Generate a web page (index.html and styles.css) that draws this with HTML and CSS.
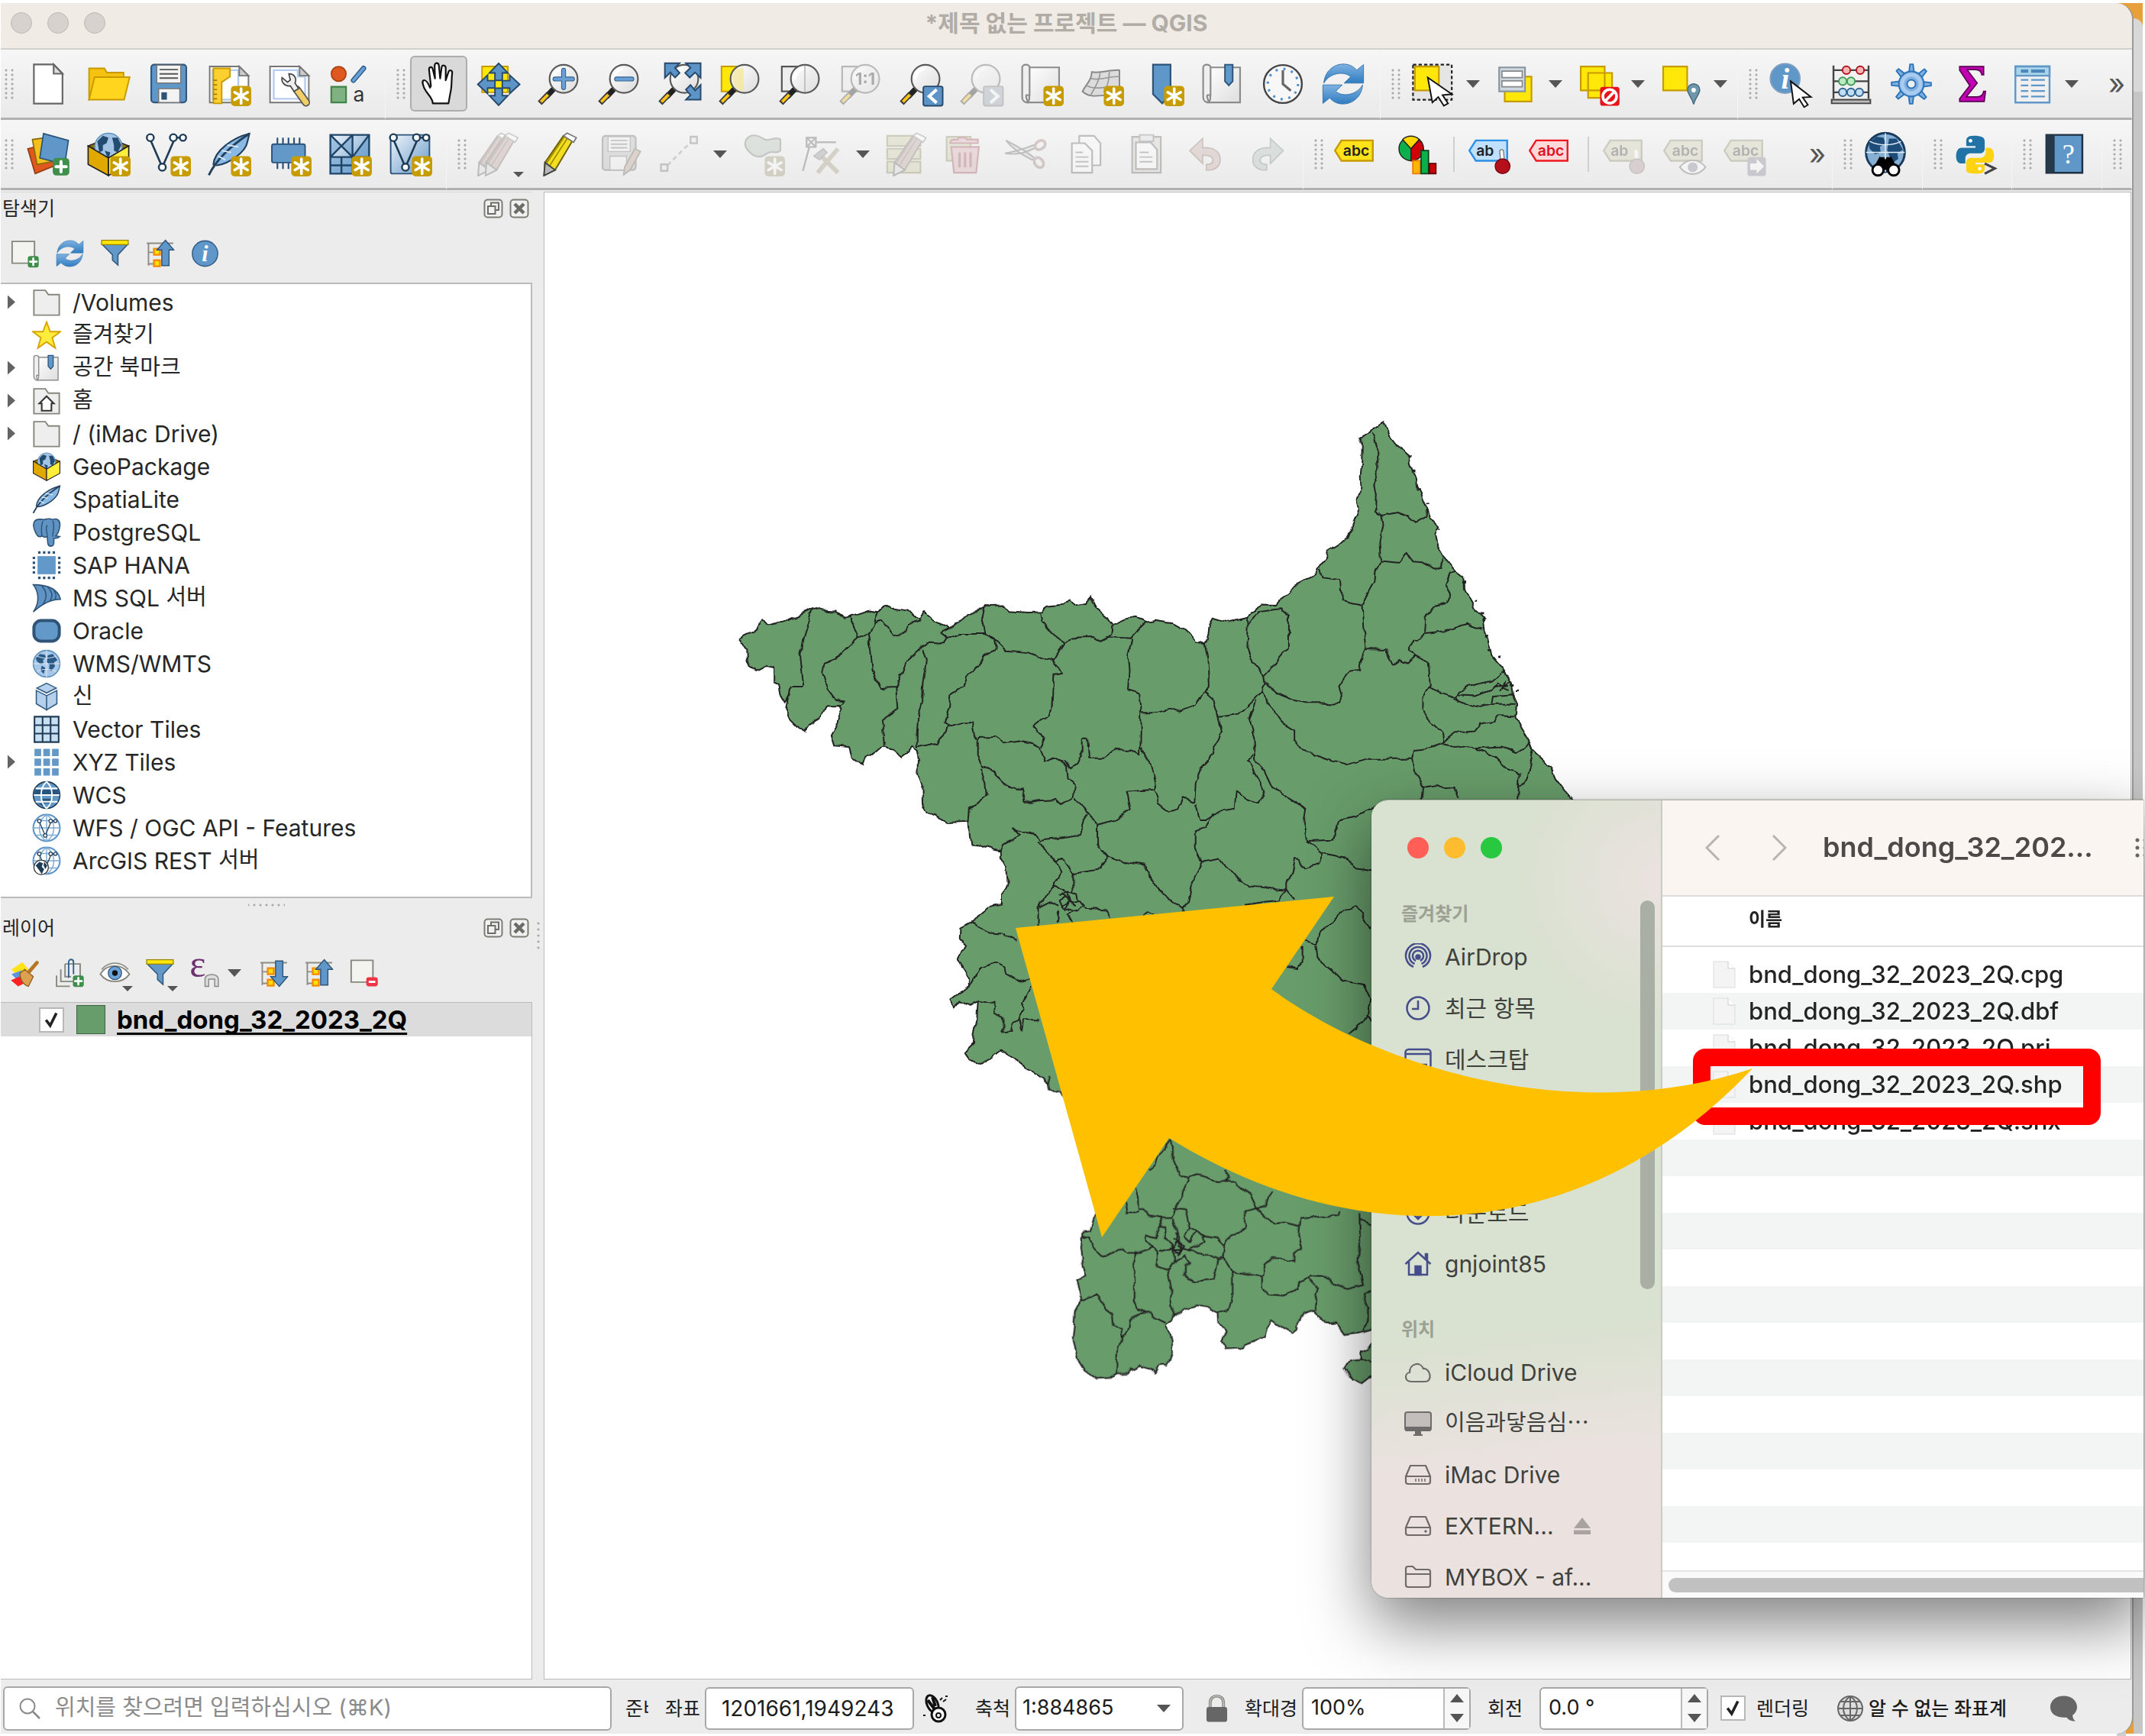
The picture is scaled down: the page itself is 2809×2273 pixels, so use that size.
FILE: index.html
```html
<!DOCTYPE html>
<html lang="ko">
<head>
<meta charset="utf-8">
<title>*제목 없는 프로젝트 — QGIS</title>
<link rel="stylesheet" href="styles.css">
</head>
<body>
<svg class="sprite" width="0" height="0" aria-hidden="true">
  <defs>
    <linearGradient id="g-glass" x1="0" y1="0" x2="1" y2="1"><stop offset="0" stop-color="#fff"/><stop offset="1" stop-color="#dcdcdc"/></linearGradient>
    <linearGradient id="g-blue" x1="0" y1="0" x2="1" y2="1"><stop offset="0" stop-color="#eef4fa"/><stop offset="1" stop-color="#6699c8"/></linearGradient>
    <linearGradient id="g-paper" x1="0" y1="0" x2="1" y2="1"><stop offset="0" stop-color="#fff"/><stop offset="1" stop-color="#dedede"/></linearGradient>
    <linearGradient id="g-sync" x1="0" y1="0" x2="0" y2="1"><stop offset="0" stop-color="#7fb2e2"/><stop offset="1" stop-color="#2f7cc0"/></linearGradient>
  </defs>
  <symbol id="b-new" viewBox="0 0 24 24"><rect x="13" y="13" width="11" height="11" rx="2" fill="#c69c00"/><path d="M18.5 14.5v8M15 16.5l7 4M22 16.5l-7 4" stroke="#fff" stroke-width="1.5" stroke-linecap="round"/></symbol>
  <symbol id="b-plus" viewBox="0 0 24 24"><rect x="14.500" y="14" width="9" height="9.500" rx="2" fill="#3f8f4c"/><path d="M19 16v5.500M16.300 18.700h5.500" stroke="#fff" stroke-width="1.700" stroke-linecap="round"/></symbol>
  <symbol id="s-lens" viewBox="0 0 24 24"><path d="M8.600 15.200L5.500 18.500" stroke="#222" stroke-width="3" stroke-linecap="round"/><path d="M6.300 17.400L1.600 22.300" stroke="#3c3c3c" stroke-width="3"/><path d="M6 17.800L2.200 21.700" stroke="#fcc419" stroke-width="1.600"/><circle cx="14.500" cy="9.200" r="7.600" fill="url(#g-glass)" stroke="#5a5a5a" stroke-width=".9"/><path d="M9 9.500a5.600 5.600 0 0 1 5-5.700" stroke="#fff" stroke-width="1.400" fill="none"/></symbol>
  <symbol id="s-sync" viewBox="0 0 24 24"><path d="M1.500 11.500C2 5 7 1 12.500 1.200c3 .1 5.300 1.500 6.800 3.300L23 1.500V11.500H12.500l3.500-3.400C13 5 5 5.500 1.500 11.500z" fill="url(#g-sync)" stroke="#3576ad" stroke-width=".4"/><path d="M22.500 12.500C22 19 17 23 11.500 22.800c-3-.1-5.300-1.500-6.800-3.300L1 22.500V12.500h10.500L8 15.900c3 3.100 11 2.600 14.500-3.400z" fill="url(#g-sync)" stroke="#3576ad" stroke-width=".4"/></symbol>
  <symbol id="s-map" viewBox="0 0 24 24"><path d="M5 3h16.500v19H3.500c2.500-.5 2-3.500 1.500-5z" fill="url(#g-paper)" stroke="#8c8c8c" stroke-width=".9"/><path d="M1.500 3c0-2 4-2 4 0v15H3.800c-.8 1 .7 2.500.7 4C2 22 1.500 20 1.500 19z" fill="#efefef" stroke="#8c8c8c" stroke-width=".9"/></symbol>
  <symbol id="s-globe" viewBox="0 0 24 24"><circle cx="12" cy="12" r="11" fill="#a9c8e8" stroke="#5f91bf" stroke-width="1"/><path d="M3 7.500l3.500-3.500 4 .5 1 2.500-2.500 2 .5 2.500-2.500 1L4 10zM13 5l4-1 4 5-3 2 1 3-3 4-2-1 .5-4-2.500-2.500zM8 13.500l3 2-1.500 5-2.500-3z" fill="#2a5a86"/><path d="M12 1v22M1 12h22M4 5.500c4 2.500 12 2.500 16 0M4 18.500c4-2.500 12-2.500 16 0" stroke="#dfeaf5" stroke-width=".6" fill="none"/></symbol>
  <symbol id="s-wire" viewBox="0 0 24 24"><circle cx="12" cy="12" r="11" fill="#fff" stroke="#5f94c8" stroke-width="1.300"/><path d="M12 1v22M1 12h22M3.500 6h17M3.500 18h17M12 1C4 6 4 18 12 23M12 1c8 5 8 17 0 22" stroke="#7eaad4" stroke-width=".9" fill="none"/></symbol>
  <symbol id="s-vnodes" viewBox="0 0 24 24"><path d="M4 4l6.500 15L17 4M17.500 3h4" stroke="#1f3c57" stroke-width="1.100" fill="none"/><g fill="#fff" stroke="#1f3c57" stroke-width="1"><circle cx="4" cy="3" r="1.900"/><circle cx="16.500" cy="3" r="1.900"/><circle cx="21.700" cy="3" r="1.700"/><circle cx="10.500" cy="19" r="1.900"/></g></symbol>
  <symbol id="i-box" viewBox="0 0 24 24"><path d="M1 7.500L12 13l11-5.500-5-2H6z" fill="#8f7300" stroke="#222" stroke-width=".6"/><circle cx="12" cy="8" r="7.400" fill="#a3c4e4" stroke="#5f91bf" stroke-width=".6"/><path d="M6 5l3-3 3 1-1 3-2 1 0 3-2 1zM14 3l3 0 2 4-2 4-2-1 0-3zM10 10l3 1-1 4z" fill="#234b70"/><path d="M1 7.500L12 14v9.500L1 17.500z" fill="#e0a800" stroke="#222" stroke-width=".7"/><path d="M23 7.500L12 14v9.500l11-6z" fill="#ffee3c" stroke="#222" stroke-width=".7"/></symbol>
  <symbol id="i-feather" viewBox="0 0 24 24"><path d="M23 .8C14 3 4 10 3.500 17.500l2 .5C12 17 21 11 22 5z" fill="#8ab9e6" stroke="#23405c" stroke-width=".9"/><path d="M23 .8C15 6 6 13 1 23.300" fill="none" stroke="#23405c" stroke-width="1.200"/><path d="M8 10l5 1M11 7l6 1M6 13l4 2" stroke="#dceafa" stroke-width=".8"/></symbol>
  <symbol id="i-funnel" viewBox="0 0 24 24"><path d="M1.500 4.500h21L14.500 13v8.500l-4.500-4V13z" fill="#6399c9" stroke="#345b80" stroke-width="1"/><rect x="1" y="1" width="22" height="3.600" fill="#ffe70a" stroke="#9c8400" stroke-width=".8"/></symbol>
  <symbol id="i-collapse" viewBox="0 0 24 24"><path d="M1 3.500h22M2.500 3.500V22M2.500 11h5M2.500 20.500h5" stroke="#8c8c85" stroke-width="1.200" fill="none"/><path d="M7 8h5v5H7zM7 17.500h5v5H7z" fill="#ffe000" stroke="#f58a00" stroke-width="1.500"/><path d="M16.500 1l7 8h-4v13h-6V9h-4z" fill="#5f97c9" stroke="#2e5478" stroke-width=".9"/></symbol>
  <symbol id="i-expand" viewBox="0 0 24 24"><path d="M1 3.500h22M2.500 3.500V22M2.500 11h5M2.500 20.500h5" stroke="#8c8c85" stroke-width="1.200" fill="none"/><path d="M7 8h5v5H7zM7 17.500h5v5H7z" fill="#ffe000" stroke="#f58a00" stroke-width="1.500"/><path d="M16.500 23l7-8h-4V2h-6v13h-4z" fill="#5f97c9" stroke="#2e5478" stroke-width=".9"/></symbol>
  <symbol id="i-folder" viewBox="0 0 24 24"><path d="M1.500 2h9.500l2.500 3.500h9V22.500h-21z" fill="#eee" stroke="#87877f" stroke-width="1.200"/></symbol>
  <symbol id="i-pencil" viewBox="0 0 24 24"><path d="M14 2l5 2.500-9.500 16L3.500 23.500 4 16.500z" fill="#f4de1e" stroke="#6e6100" stroke-width=".8"/><path d="M16 3.500L6 19M14.500 2.500L4.800 17" stroke="#a08f00" stroke-width=".7"/><path d="M4 16.500l5.500 4-6 3z" fill="#b9b9b9" stroke="#444" stroke-width=".8"/><path d="M14 2l2-1.500 5 2.500-1.500 2.500z" fill="#fff" stroke="#777" stroke-width=".7"/></symbol>
  <symbol id="i-pencil-dull" viewBox="0 0 24 24"><path d="M14 2l5 2.500-9.500 16L3.500 23.500 4 16.500z" fill="#bfa49c" stroke="#7a6a64" stroke-width=".8"/><path d="M16 3.500L6 19M14.500 2.500L4.800 17" stroke="#8d7a74" stroke-width=".7"/><path d="M4 16.500l5.500 4-6 3z" fill="#ddd" stroke="#666" stroke-width=".8"/><path d="M14 2l2-1.500 5 2.500-1.500 2.500z" fill="#fff" stroke="#888" stroke-width=".7"/></symbol>
  <symbol id="i-tag" viewBox="0 0 24 24"><path d="M.5 10L4 4.500H21V15.500H4z"/></symbol>
  <symbol id="i-file" viewBox="0 0 30 36"><path d="M1 1h19l9 9v25H1z" fill="#f4f4f4" stroke="#dcdcdc"/><path d="M20 1v9h9" fill="#fff" stroke="#ccc"/></symbol>
  <symbol id="i-drive" viewBox="0 0 36 30"><path d="M8 3h20l6 14v7q0 3-3 3H5q-3 0-3-3v-7zM2 17h32" fill="none" stroke="#6f6b6a" stroke-width="2.200" stroke-linejoin="round"/></symbol>
  <symbol id="i-float" viewBox="0 0 26 26"><rect x="1.500" y="1.500" width="23" height="23" rx="4" fill="#f1f1f1" stroke="#7d7d76" stroke-width="2"/><path d="M10 9V5.500h10V15h-4M6 10h9.500v10H6z" fill="none" stroke="#6d6d67" stroke-width="2"/></symbol>
  <symbol id="i-x" viewBox="0 0 26 26"><rect x="1.500" y="1.500" width="23" height="23" rx="4" fill="#f1f1f1" stroke="#7d7d76" stroke-width="2"/><path d="M7 7l12 12M19 7L7 19" stroke="#6d6d67" stroke-width="4.500"/></symbol>
</svg>

<div class="desktop">
<div class="qgis">
  <header class="titlebar">
    <div class="lights"><i></i><i></i><i></i></div>
    <h1>*제목 없는 프로젝트 — QGIS</h1>
  </header>

  <div class="toolrow toolrow-main">
    <div class="group">
      <span class="grip"></span>
      <button aria-label="새 프로젝트"><svg viewBox="0 0 24 24"><path d="M4.300 1.400H15l4.800 5v16.200H4.300z" fill="#fff" stroke="#666" stroke-width=".9"/><path d="M15 1.400v5h4.800z" fill="#ddd" stroke="#666" stroke-width=".9"/></svg></button>
      <button aria-label="열기"><svg viewBox="0 0 24 24"><path d="M1.500 20.500V3.500h8.300l1.400 2.300h9V12z" fill="#f5c211" stroke="#c79a00" stroke-width=".8"/><path d="M1.500 20.500L4.500 8.300h19l-3 12.200z" fill="#ffd51e" stroke="#c79a00" stroke-width=".8"/></svg></button>
      <button aria-label="저장"><svg viewBox="0 0 24 24"><rect x="2.500" y="1.500" width="19" height="20.500" rx="1.600" fill="#5f97c9" stroke="#34577c" stroke-width=".9"/><path d="M5.500 1.800h13v9.700h-13z" fill="#f3f3f3" stroke="#777" stroke-width=".6"/><path d="M7 4.200h10M7 6.500h10M7 8.800h10" stroke="#555" stroke-width=".8"/><path d="M6.500 14.500h11.500V22H6.500z" fill="#f3f3f3" stroke="#777" stroke-width=".6"/><path d="M8 16.500h3v4H8z" fill="#2c5379"/></svg></button>
      <button aria-label="새 인쇄 조판"><svg viewBox="0 0 24 24"><path d="M1.500 2.500h16l5 5V22h-21z" fill="#fff" stroke="#777" stroke-width=".8"/><path d="M3 4.500h14v16H3z" fill="#fff" stroke="#b5cdf1"/><path d="M17.500 2.500v5h5z" fill="#ccc" stroke="#777" stroke-width=".8"/><path d="M3.500 3.500h9v4.500l-4.500 3V22.500H3.500z" fill="#fdd02f" stroke="#c99a00" stroke-width=".8"/><path d="M3.500 10h2M3.500 12.500h2M3.500 15h2M3.500 17.500h2M3.500 20h2" stroke="#a67c00" stroke-width=".7"/><use href="#b-new"/></svg></button>
      <button aria-label="조판 관리자"><svg viewBox="0 0 24 24"><path d="M1.500 2.500h16l5 5V22h-21z" fill="#fff" stroke="#777" stroke-width=".8"/><path d="M3.500 4.500h13v3.500h4V20h-17z" fill="#fff" stroke="#b5cdf1"/><path d="M17.500 2.500v5h5z" fill="#ccc" stroke="#777" stroke-width=".8"/><path d="M16 15l5 7" stroke="#555" stroke-width="4.400" stroke-linecap="round"/><path d="M16 15l5 7" stroke="#f0cf68" stroke-width="3" stroke-linecap="round"/><path d="M8 8.500l3 2.500 1.500-1.200-.8-3.300c3 0 4.500 2.500 3.300 5l2 3-2.500 1.500-2-3C9.500 13.500 7.500 11 8 8.500z" fill="#eee" stroke="#444" stroke-width=".7"/></svg></button>
      <button aria-label="스타일 관리자"><svg viewBox="0 0 24 24"><circle cx="6" cy="6.500" r="4" fill="#e0581f" stroke="#a8410f" stroke-width=".7"/><path d="M14 10L19.500 3.500" stroke="#2c5d8c" stroke-width="2.800" stroke-linecap="round"/><path d="M14 10L19.500 3.500" stroke="#6ba0d4" stroke-width="1.600" stroke-linecap="round"/><path d="M2 13.500h8v8.500H2z" fill="#80b183" stroke="#3f8448" stroke-width=".9"/><text x="17" y="21.500" font-size="11" text-anchor="middle" fill="#333" font-family="Inter, sans-serif">a</text></svg></button>
    </div>
    <div class="group">
      <span class="grip"></span>
      <button class="pressed" aria-label="지도 이동"><svg viewBox="0 0 24 24"><path d="M9 22.500c0-3-3-5-4.500-8C3.500 12 3 10.500 4 10c1.500-.5 2.500 1.500 3.500 4L8 13 7 4.500c-.2-2 1.700-2.200 2-.5L10.200 9 10 2c0-1.800 2.200-1.800 2.300 0L13 9l.8-6c.2-1.600 2.200-1.300 2.200.3L16 10l1.500-4.500c.5-1.500 2.300-1 2 .6C19 10 19.500 13 18.500 17l-1 5.500z" fill="#fff" stroke="#111" stroke-width=".9" stroke-linejoin="round"/></svg></button>
      <button aria-label="선택으로 이동"><svg viewBox="0 0 24 24"><path d="M3 2.500h14v14H3z" fill="#ffe70a" stroke="#c79a00" stroke-width=".8"/><path d="M12 .8l5 5.200h-3v4h-4V6H7zM12 23.500l5-5.200h-3v-4h-4v4H7zM.7 12.200L6 7.200v3h4v4H6v3zM23.400 12.200L18 7.200v3h-4v4h4v3z" fill="#5c94c8" stroke="#27496b" stroke-width=".8"/></svg></button>
      <button aria-label="확대"><svg viewBox="0 0 24 24"><use href="#s-lens"/><path d="M14.500 4.500v9.500M9.800 9.300h9.500" stroke="#34628f" stroke-width="2.600" stroke-linecap="round"/><path d="M14.500 4.500v9.500M9.800 9.300h9.500" stroke="#6ba0d4" stroke-width="1.700" stroke-linecap="round"/></svg></button>
      <button aria-label="축소"><svg viewBox="0 0 24 24"><use href="#s-lens"/><path d="M10.500 9.300h8.300" stroke="#34628f" stroke-width="2.600" stroke-linecap="round"/><path d="M10.500 9.300h8.300" stroke="#6ba0d4" stroke-width="1.700" stroke-linecap="round"/></svg></button>
      <button aria-label="전체 보기"><svg viewBox="0 0 24 24"><use href="#s-lens"/><g fill="#5c94c8" stroke="#27496b" stroke-width=".8"><path d="M4 .7h8L9.500 3.200 12 6 9.500 8.500 7 5.700 4 8.700zM23.400.7h-8L17.900 3.200 15 6l2.500 2.500 2.900-2.800 3 3zM23.400 20.500h-8l2.500-2.500-2.500-3 2.500-2.500 2.500 3 3-3z"/></g></svg></button>
      <button aria-label="선택 영역 확대"><svg viewBox="0 0 24 24"><path d="M2 2.500h10v13.500H2z" fill="#ffe70a" stroke="#c79a00" stroke-width=".8"/><use href="#s-lens"/><path d="M14 3v13a7 7 0 0 1-4-12z" fill="#f2e6a0" opacity=".8"/></svg></button>
      <button aria-label="레이어 영역 확대"><svg viewBox="0 0 24 24"><path d="M2 2.500h10v13.500H2z" fill="#eee" stroke="#555" stroke-width=".9"/><use href="#s-lens"/><path d="M14.500 2v14" stroke="#bbb" stroke-width=".7"/></svg></button>
      <button class="off" aria-label="원본 해상도"><svg viewBox="0 0 24 24"><path d="M2 2.500h10v13.500H2z" fill="#eee" stroke="#555" stroke-width=".9"/><use href="#s-lens"/><text x="14.500" y="12.500" font-size="9" font-weight="bold" text-anchor="middle" fill="#333" font-family="Inter, sans-serif">1:1</text></svg></button>
      <button aria-label="이전 화면"><svg viewBox="0 0 24 24"><use href="#s-lens"/><rect x="13.300" y="13.300" width="10.500" height="10.500" rx="1" fill="#5c94c8" stroke="#27496b" stroke-width=".8"/><path d="M20.500 15l-4 3.600 4 3.600" stroke="#fff" stroke-width="1.700" fill="none"/></svg></button>
      <button class="off" aria-label="다음 화면"><svg viewBox="0 0 24 24"><use href="#s-lens"/><rect x="13.300" y="13.300" width="10.500" height="10.500" rx="1" fill="#9aa7b3" stroke="#777" stroke-width=".8"/><path d="M17 15l4 3.600-4 3.600" stroke="#fff" stroke-width="1.700" fill="none"/></svg></button>
      <button aria-label="새 지도 뷰"><svg viewBox="0 0 24 24"><use href="#s-map"/><use href="#b-new"/></svg></button>
      <button aria-label="새 3D 뷰"><svg viewBox="0 0 24 24"><path d="M6.500 5.500c5 1 10-1.500 15-1v15c-7-4-14 2-20-3.500 2-4 5-6 5-10.500z" fill="#dcdcdc" stroke="#888" stroke-width=".8"/><path d="M6 9c5 1.500 10-1.500 15.500-1M4 13c6 3 12-1 17.500 1M11 6c0 4-3 8-5 12M16 5.500c0 4-1 8-3 11" stroke="#999" stroke-width=".7" fill="none"/><use href="#b-new"/></svg></button>
      <button aria-label="새 북마크"><svg viewBox="0 0 24 24"><path d="M7 1.500h9.500v16l-4.500 5-5-5z" fill="#5f97c9" stroke="#2c5379" stroke-width=".9"/><use href="#b-new"/></svg></button>
      <button aria-label="북마크 보기"><svg viewBox="0 0 24 24"><use href="#s-map"/><path d="M13.300 1.500h4.200v9l-2.100 2.300-2.100-2.300z" fill="#5f97c9" stroke="#2c5379" stroke-width=".8"/></svg></button>
      <button aria-label="시간 제어기"><svg viewBox="0 0 24 24"><circle cx="12" cy="12" r="10.300" fill="#f7f7f7" stroke="#444" stroke-width="1"/><circle cx="12" cy="12" r="8.200" fill="none" stroke="#4b90cf" stroke-width="1.300" stroke-dasharray="1.200 3.094"/><path d="M12 4.500V12l4.300 3.600" stroke="#666" stroke-width="1.300" fill="none"/></svg></button>
      <button aria-label="새로고침"><svg viewBox="0 0 24 24"><use href="#s-sync"/></svg></button>
    </div>
    <div class="group">
      <span class="grip"></span>
      <button class="menu" aria-label="객체 선택"><svg viewBox="0 0 24 24"><path d="M1 1.500h21v19H1z" fill="#e5e5e5" stroke="#222" stroke-width=".9" stroke-dasharray="1.800 1.200"/><path d="M2 2.500h13v13H2z" fill="#ffe70a" stroke="#c79a00" stroke-width=".9"/><path d="M9 8.500l13 9-5 .5 3 4.500-2.300 1.300-3-4.800-3.200 3z" fill="#fff" stroke="#111" stroke-width=".8"/></svg><b class="tri"></b></button>
      <button class="menu" aria-label="값으로 선택"><svg viewBox="0 0 24 24"><path d="M6 8h14.500v13.500H6z" fill="#ffe70a" stroke="#c79a00" stroke-width=".9"/><path d="M3 3h14v13H3z" fill="#cdd8e0" stroke="#8a949c" stroke-width=".9"/><path d="M4.500 5h11v3.500h-11zM4.500 10.300h11v3.200h-11z" fill="#fff" stroke="#888" stroke-width=".7"/></svg><b class="tri"></b></button>
      <button class="menu" aria-label="선택 해제"><svg viewBox="0 0 24 24"><path d="M2.500 2.500H15.500v13h-13zM6.500 6h13v13.500h-13z" fill="#ffe70a" stroke="#c79a00" stroke-width=".9"/><rect x="13" y="13.500" width="10.500" height="10.300" rx="1.500" fill="#e8141c"/><circle cx="18.200" cy="18.700" r="3.700" fill="none" stroke="#fff" stroke-width="1.500"/><path d="M15.700 21.300l5-5.200" stroke="#fff" stroke-width="1.500"/></svg><b class="tri"></b></button>
      <button class="menu" aria-label="위치로 선택"><svg viewBox="0 0 24 24"><path d="M2.500 2.500H15.500v13h-13z" fill="#ffe70a" stroke="#c79a00" stroke-width=".9"/><path d="M19 23c-1-4-3.300-5.500-3.300-7.800a3.300 3.300 0 0 1 6.600 0C22.300 17.500 20 19 19 23z" fill="#6d97ab" stroke="#44697c" stroke-width=".6"/><circle cx="19" cy="15.300" r="1.200" fill="#fff"/></svg><b class="tri"></b></button>
    </div>
    <div class="group last">
      <span class="grip"></span>
      <button aria-label="객체 식별"><svg viewBox="0 0 24 24"><circle cx="9" cy="9" r="8" fill="#5f97c9" stroke="#7f9fbe" stroke-width=".8"/><text x="9" y="14.500" font-size="16" font-style="italic" font-weight="bold" text-anchor="middle" fill="#fff" font-family="Liberation Serif, serif">i</text><path d="M12 10.500l11 8.500-4.500.3 2.800 4-2 1.200-2.700-4.300-3 2.500z" fill="#fff" stroke="#111" stroke-width=".8"/></svg></button>
      <button aria-label="필드 계산기"><svg viewBox="0 0 24 24"><path d="M2.500 2v18M21.500 2v18M2.500 4.500h19M2.500 10.500h19M2.500 16.500h19" stroke="#444" stroke-width="1"/><path d="M1.500 20.500h21v2h-21z" fill="#bbb" stroke="#444" stroke-width=".8"/><g stroke-width=".8"><g fill="#f6b5b5" stroke="#b3131b"><circle cx="9.500" cy="4.500" r="2.100"/><circle cx="17" cy="4.500" r="2.100"/></g><g fill="#b9ecc0" stroke="#47985a"><circle cx="7.500" cy="10.500" r="2.100"/><circle cx="12" cy="10.500" r="2.100"/></g><g fill="#c0ddf4" stroke="#2f6590"><circle cx="7.500" cy="16.500" r="2.100"/><circle cx="12" cy="16.500" r="2.100"/><circle cx="16.500" cy="16.500" r="2.100"/></g></g></svg></button>
      <button aria-label="공간 처리 툴박스"><svg viewBox="0 0 24 24"><g fill="#80b0e2" stroke="#2c74b8" stroke-width=".8"><path id="tooth" d="M10.700 6l.6-4.700h1.600l.6 4.700z"/><use href="#tooth" transform="rotate(45 12 12)"/><use href="#tooth" transform="rotate(90 12 12)"/><use href="#tooth" transform="rotate(135 12 12)"/><use href="#tooth" transform="rotate(180 12 12)"/><use href="#tooth" transform="rotate(225 12 12)"/><use href="#tooth" transform="rotate(270 12 12)"/><use href="#tooth" transform="rotate(315 12 12)"/><circle cx="12" cy="12" r="6.800"/></g><circle cx="12" cy="12" r="5" fill="none" stroke="#a9cbef" stroke-width="2"/><circle cx="12" cy="12" r="2.300" fill="#eee" stroke="#2c74b8" stroke-width=".8"/></svg></button>
      <button aria-label="통계 요약"><svg viewBox="0 0 24 24"><path d="M5.500 2.500h13v4.500h-1c-.3-2-1.500-2.800-3.500-2.800H9.500L15 11.500 9 19h6c2 0 3.200-1 3.500-3h1l-.7 5.500H5.500V20L11 12.800 5.500 4.500z" fill="#c400b4" stroke="#5a0053" stroke-width=".7"/></svg></button>
      <button class="menu" aria-label="속성 테이블 열기"><svg viewBox="0 0 24 24"><path d="M3 2.500h18.500v19.500H3z" fill="#f0f0f0" stroke="#5f97c9" stroke-width="1"/><path d="M3 2.500h18.500v5H3z" fill="#aad4ea" stroke="#5f97c9" stroke-width="1"/><path d="M6 5h4M11.500 5H19" stroke="#4c86ba" stroke-width="1.800"/><path d="M6 9.800h4M11.500 9.800H19M6 12.800h4M11.500 12.800H19M6 15.800h4M11.500 15.800H19M6 18.800h4M11.500 18.800H19" stroke="#5f97c9" stroke-width=".9"/></svg><b class="tri"></b></button>
      <button class="more" aria-label="더 보기">»</button>
    </div>
  </div>

  <div class="toolrow toolrow-edit">
    <div class="group">
      <span class="grip"></span>
      <button aria-label="데이터 소스 관리자"><svg viewBox="0 0 24 24"><path d="M1 9l12-3 3 12L5 22.500z" fill="#e0581f" stroke="#943c12" stroke-width=".7"/><path d="M3.500 4l11-1.500 2 13L6 17.500z" fill="#f2bf1d" stroke="#8a6b00" stroke-width=".7"/><path d="M9.500.8L23 4.500l-2 13L7.500 14z" fill="#5f97c9" stroke="#2c5379" stroke-width=".7"/><use href="#b-plus"/></svg></button>
      <button aria-label="새 GeoPackage"><svg viewBox="0 0 24 24"><use href="#i-box"/><use href="#b-new"/></svg></button>
      <button aria-label="새 Shapefile"><svg viewBox="0 0 24 24"><use href="#s-vnodes" x="-2"/><use href="#b-new"/></svg></button>
      <button aria-label="새 SpatiaLite"><svg viewBox="0 0 24 24"><use href="#i-feather"/><use href="#b-new"/></svg></button>
      <button aria-label="새 임시 레이어"><svg viewBox="0 0 24 24"><path d="M5.500 3v17M8.500 3v17M11.500 3v17M14.500 3v17M17.500 3v17" stroke="#2c5379" stroke-width=".9"/><rect x="2.500" y="6.500" width="18" height="10" rx="1" fill="#6399c9" stroke="#2c5379" stroke-width=".8"/><use href="#b-new"/></svg></button>
      <button aria-label="새 메시 레이어"><svg viewBox="0 0 24 24"><path d="M1.500 1.500h21v12h-9V22.500h-12z" fill="url(#g-blue)"/><path d="M1.500 1.500h21v12h-21zM1.500 13.500V22.500h12V1.500M1.500 1.500l12 12L22.500 1.500M13.500 1.500l-12 12M7.500 13.500v9M1.500 18h12" fill="#5f97c980" stroke="#1f4468" stroke-width="1"/><use href="#b-new"/></svg></button>
      <button aria-label="새 가상 레이어"><svg viewBox="0 0 24 24"><rect x="1.500" y="1.500" width="21" height="21" rx="1" fill="url(#g-blue)" stroke="#2c5379" stroke-width=".8"/><use href="#s-vnodes" x="-1"/><use href="#b-new"/></svg></button>
    </div>
    <div class="group">
      <span class="grip"></span>
      <button class="off" aria-label="현재 편집"><svg viewBox="0 0 24 24"><use href="#i-pencil-dull" x="-3"/><use href="#i-pencil-dull" x="1"/></svg><b class="tri small"></b></button>
      <button aria-label="편집 켜기"><svg viewBox="0 0 24 24"><use href="#i-pencil"/></svg></button>
      <button class="off" aria-label="편집 저장"><svg viewBox="0 0 24 24"><rect x="2.500" y="2" width="18" height="18.500" rx="1.600" fill="#bbb" stroke="#666" stroke-width=".9"/><path d="M5.500 2.500h12v8h-12z" fill="#f3f3f3" stroke="#777" stroke-width=".6"/><path d="M7 4.500h9M7 6.500h9M7 8.500h9" stroke="#777" stroke-width=".8"/><path d="M6.500 13h9v7.500h-9z" fill="#f3f3f3" stroke="#777" stroke-width=".6"/><path d="M20 9l3 1.500-5.500 10-3.500 2.500.5-4z" fill="#c0a090" stroke="#665" stroke-width=".8"/></svg></button>
      <button class="menu off" aria-label="선분 디지타이즈"><svg viewBox="0 0 24 24"><path d="M5 18L18 5" stroke="#999" stroke-width="1.200" stroke-dasharray="2.500 1.800"/><path d="M1.500 17.500h3.500v3.500H1.500zM17.500 2.500h3.500v3.500h-3.500z" fill="#eee" stroke="#777" stroke-width="1"/></svg><b class="tri"></b></button>
      <button class="off" aria-label="폴리곤 추가"><svg viewBox="0 0 24 24"><path d="M3 4c3-4 7-2 10 0 3 1 6-2 8.500 0v6c-2 2.500-4-1-8 2-3 2.500-7 1-9-1.500C2.500 8.500 2 6 3 4z" fill="#b8c4b9" stroke="#777" stroke-width=".9"/><use class="dull" href="#b-new"/></svg></button>
      <button class="menu off" aria-label="꼭짓점 도구"><svg viewBox="0 0 24 24"><path d="M3 3h5v5H3zM3 3l5 5M8 3L3 8M8 5.500h11M4.500 8L1 21" fill="none" stroke="#666" stroke-width="1"/><path d="M9 11l11 11M20 9L9 22" stroke="#a59c84" stroke-width="2.400"/><path d="M7 13l5-4 2 2-4 4z" fill="#999" stroke="#777" stroke-width=".7"/></svg><b class="tri"></b></button>
      <button class="off" aria-label="다중 편집"><svg viewBox="0 0 24 24"><path d="M2 2h18v5.500H2zM2 9h18v5.500H2zM2 16h18v6H2z" fill="#d0d0a8" stroke="#8c8c60" stroke-width=".9"/><use href="#i-pencil-dull" x="2"/></svg></button>
      <button class="off" aria-label="선택 삭제"><svg viewBox="0 0 24 24"><path d="M1.500 2.500h13v13h-13z" fill="#d0d0a8" stroke="#8c8c60" stroke-width=".9"/><path d="M3.500 6c0-2 1-2 4-2 0-1.500 5-1.500 5 0h6v2zM4 8h15l-1.500 14h-12z" fill="#dcaeb4" stroke="#a0525d" stroke-width=".9"/><path d="M8.500 11v8M11.500 11v8M14.500 11v8" stroke="#a0525d" stroke-width="1.300"/></svg></button>
      <button class="off" aria-label="잘라내기"><svg viewBox="0 0 24 24"><path d="M1 4.500C6 7 13 11 17 14.500l-2 .5C10 12.500 4 8.500 1 4.500zM.5 11.500C6 12.500 12 11 17 8.500l-1-1.500C11 9 6 10.500.5 11.500z" fill="#ccc" stroke="#666" stroke-width=".8"/><ellipse cx="19.500" cy="7" rx="3" ry="2.200" fill="none" stroke="#a08080" stroke-width="1.500" transform="rotate(-35 19.500 7)"/><ellipse cx="18.800" cy="16.500" rx="3" ry="2.200" fill="none" stroke="#a08080" stroke-width="1.500" transform="rotate(50 18.800 16.500)"/></svg></button>
      <button class="off" aria-label="복사"><svg viewBox="0 0 24 24"><path d="M8 2h8l3.500 4v12H8z" fill="#fff" stroke="#666" stroke-width=".9"/><path d="M4 6h7l4 4v12H4z" fill="#fff" stroke="#666" stroke-width=".9"/><path d="M6 11h4M6 13.500h7M6 16h7M6 18.500h7" stroke="#777" stroke-width=".8"/></svg></button>
      <button class="off" aria-label="붙여넣기"><svg viewBox="0 0 24 24"><path d="M4 2.500h15.500V22H4z" fill="#d8d0c8" stroke="#666" stroke-width=".9"/><path d="M6 5.500h8l3.500 4V20H6z" fill="#fff" stroke="#666" stroke-width=".9"/><path d="M8 1.500h7.500V5H8zM8 11h5M8 13.500h7M8 16h7" fill="#ddd" stroke="#777" stroke-width=".8"/></svg></button>
      <button class="off" aria-label="실행 취소"><svg viewBox="0 0 24 24"><path d="M9.500 3.500v5c6-.5 9.500 2 9.500 6.500 0 4-3.500 6-7.500 5.500v-3c2.500 0 3.800-.8 3.500-2.700-.2-1.600-2-2.300-5.500-2.300V17L2.500 10z" fill="#c9b0a8" stroke="#8c7068" stroke-width=".7"/></svg></button>
      <button class="off" aria-label="다시 실행"><svg viewBox="0 0 24 24"><path d="M13.500 3.500v5C7.500 8 4 10.500 4 15c0 4 3.500 6 7.500 5.500v-3C9 17.500 7.700 16.700 8 14.800c.2-1.600 2-2.300 5.500-2.300V17l7-7z" fill="#b3c2bb" stroke="#748880" stroke-width=".7"/></svg></button>
    </div>
    <div class="group">
      <span class="grip"></span>
      <button aria-label="레이어 라벨"><svg viewBox="0 0 24 24"><use href="#i-tag" fill="#ffe21a" stroke="#c79a00"/><text x="12" y="13" font-size="8" font-weight="600" text-anchor="middle" fill="#222" font-family="Inter, sans-serif">abc</text></svg></button>
      <button aria-label="레이어 다이어그램"><svg viewBox="0 0 24 24"><circle cx="9" cy="9" r="6.500" fill="#0bb04b" stroke="#222" stroke-width=".6"/><path d="M9 9L4.500 4a6.500 6.500 0 0 1 9 0z" fill="#ffd800" stroke="#222" stroke-width=".6"/><path d="M9 9l4.500-5a6.500 6.500 0 0 1-4.500 11.500z" fill="#cf0008" stroke="#222" stroke-width=".6"/><path d="M10 15.500h4v7h-4z" fill="#ffb400" stroke="#f07800" stroke-width=".7"/><path d="M14.500 10h4v12.500h-4z" fill="#0bb04b" stroke="#06401c" stroke-width=".7"/><path d="M19 17h3.500v5.500H19z" fill="#cf0008" stroke="#5a0000" stroke-width=".7"/></svg></button>
      <span class="sep"></span>
      <button aria-label="고정 라벨 강조"><svg viewBox="0 0 24 24"><use href="#i-tag" fill="#bfe0ff" stroke="#2a8fe6"/><text x="9" y="13" font-size="8" font-weight="600" text-anchor="middle" fill="#222" font-family="Inter, sans-serif">ab</text><path d="M18 10.500l.6 7" stroke="#777" stroke-width="2.600" stroke-linecap="round"/><path d="M18 10.500l.6 7" stroke="#fff" stroke-width="1.500" stroke-linecap="round"/><circle cx="18.500" cy="18.500" r="4" fill="#b50f1c" stroke="#7a0811" stroke-width=".6"/></svg></button>
      <button aria-label="미배치 라벨"><svg viewBox="0 0 24 24"><use href="#i-tag" fill="#ffd9da" stroke="#f01820"/><text x="12" y="13" font-size="8" font-weight="600" text-anchor="middle" fill="#e0101c" font-family="Inter, sans-serif">abc</text></svg></button>
      <span class="sep"></span>
      <button class="off" aria-label="라벨 고정"><svg viewBox="0 0 24 24"><use href="#i-tag" fill="#d0d0b0" stroke="#8c8c70"/><text x="9" y="13" font-size="8" font-weight="600" text-anchor="middle" fill="#444" font-family="Inter, sans-serif">ab</text><path d="M18 10.500l.6 7" stroke="#fff" stroke-width="2" stroke-linecap="round"/><circle cx="18.500" cy="18.500" r="4" fill="#b09a9c" stroke="#877" stroke-width=".6"/></svg></button>
      <button class="off" aria-label="라벨 표시"><svg viewBox="0 0 24 24"><use href="#i-tag" fill="#d0d0b0" stroke="#8c8c70"/><text x="12" y="13" font-size="8" font-weight="600" text-anchor="middle" fill="#444" font-family="Inter, sans-serif">abc</text><path d="M9 19c4-5 10-5 14 0-4 5-10 5-14 0z" fill="#fff" stroke="#666" stroke-width=".8"/><circle cx="16" cy="19" r="2.700" fill="#889"/></svg></button>
      <button class="off" aria-label="라벨 이동"><svg viewBox="0 0 24 24"><use href="#i-tag" fill="#d0d0b0" stroke="#8c8c70"/><text x="12" y="13" font-size="8" font-weight="600" text-anchor="middle" fill="#444" font-family="Inter, sans-serif">abc</text><rect x="13" y="13.500" width="10" height="10.300" rx="1.500" fill="#889"/><path d="M14.500 17H18v-2.500l4 4-4 4V20.500h-3.500z" fill="#fff"/></svg></button>
      <button class="more" aria-label="더 보기">»</button>
    </div>
    <div class="group">
      <span class="grip"></span>
      <button aria-label="MetaSearch"><svg viewBox="0 0 24 24"><circle cx="12" cy="11" r="10.500" fill="#87aed3" stroke="#173c5e" stroke-width="1.200"/><path d="M3 6l4-3.500 4 .5 1 3-3 2 .5 3-3 1-3-3zM14 3.500l4 0 3.500 6-3 2 .5 3-3 2-2-4-1-3z" fill="#1d4c78"/><path d="M12 .5v21M1.500 11h21M3.500 5c5 2.500 12 2.500 17 0" stroke="#e4eef7" stroke-width=".6" fill="none"/><path d="M9 13.500h2.300l.7 1.500.7-1.500H15l4 7H5z"/><path d="M5 20.500l4-7.500 2.500 8zM19 20.500l-4-7.500-2.500 8z"/><g fill="#fff" stroke="#000" stroke-width="1.200"><circle cx="8" cy="20.500" r="3"/><circle cx="16.500" cy="20.500" r="3"/></g></svg></button>
    </div>
    <div class="group">
      <span class="grip"></span>
      <button aria-label="파이썬 콘솔"><svg viewBox="0 0 24 24"><path d="M11 2C7.500 2 7 3.500 7 5v2.500h5v1H4.500C2.500 8.500 1.500 10.500 1.500 13s1 4 3 4h2v-2.500c0-2 1.300-3 3-3h5c1.500 0 2.500-1.200 2.500-2.500V5c0-2-1.500-3-6-3z" fill="#2273a5"/><circle cx="9.300" cy="4.700" r="1" fill="#fff"/><path d="M12.500 22.500c4 0 4.500-1.500 4.500-3V17.500h-5v-1h7.500c2 0 2.500-2 2.500-4s-1-4-2.500-4h-2v2.500c0 2-1.500 3-3 3h-5c-1.500 0-2.500 1.200-2.500 2.500v4c0 1.500 1.500 2 5.500 2z" fill="#ffd312"/><circle cx="14.300" cy="19.800" r="1" fill="#fff"/><path d="M17 17l5.500 2.700-5.500 2.800" fill="none" stroke="#444" stroke-width="1.300"/></svg></button>
    </div>
    <div class="group">
      <span class="grip"></span>
      <button aria-label="도움말"><svg viewBox="0 0 24 24"><path d="M2 1.500h19.500v20.500H2z" fill="#5f97c9" stroke="#1d2f40" stroke-width="1"/><path d="M2 1.500h4.500v20.500H2z" fill="#26394b"/><text x="14" y="17" font-size="15" text-anchor="middle" fill="#fff" font-family="Liberation Serif, serif">?</text></svg></button>
    </div>
    <div class="group"><span class="grip"></span></div>
  </div>

  <div class="work">
    <aside class="docks">
      <section class="dock">
        <div class="dock-title"><h2>탐색기</h2><button aria-label="띄우기"><svg><use href="#i-float"/></svg></button><button aria-label="닫기"><svg><use href="#i-x"/></svg></button></div>
        <div class="dock-tools">
          <button aria-label="레이어 추가"><svg viewBox="0 0 24 24"><path d="M1.500 2h18.500v18H1.500z" fill="#f3f3ef" stroke="#87877f" stroke-width="1.200"/><use href="#b-plus"/></svg></button>
          <button aria-label="새로고침"><svg viewBox="0 0 24 24"><use href="#s-sync"/></svg></button>
          <button aria-label="필터"><svg viewBox="0 0 24 24"><use href="#i-funnel"/></svg></button>
          <button aria-label="모두 접기"><svg viewBox="0 0 24 24"><use href="#i-collapse"/></svg></button>
          <button aria-label="속성"><svg viewBox="0 0 24 24"><circle cx="12" cy="12" r="10.500" fill="#6097ca" stroke="#38608a" stroke-width="1"/><text x="12" y="18.500" font-size="19" font-style="italic" font-weight="bold" text-anchor="middle" fill="#fff" font-family="Liberation Serif, serif">i</text></svg></button>
        </div>
        <ul class="tree">
          <li class="open"><svg class="ic"><use href="#i-folder"/></svg>/Volumes</li>
          <li><svg class="ic" viewBox="0 0 24 24"><path d="M12 1l3 8h8.500l-6.800 5 2.500 8.500L12 17.500 4.800 22.500 7.300 14 .5 9H9z" fill="#ffec3d" stroke="#d9a400" stroke-width="1.200"/></svg><span class="ko">즐겨찾기</span></li>
          <li class="open"><svg class="ic" viewBox="0 0 24 24"><use href="#s-map"/><path d="M13.300 1.500h4.200v9l-2.100 2.300-2.100-2.300z" fill="#5f97c9" stroke="#2c5379" stroke-width=".8"/></svg><span class="ko">공간 북마크</span></li>
          <li class="open"><svg class="ic" viewBox="0 0 24 24"><use href="#i-folder"/><path d="M6 14l6-6 6 6h-2v6H8v-6z" fill="#fff" stroke="#333" stroke-width="1.300"/></svg><span class="ko">홈</span></li>
          <li class="open"><svg class="ic"><use href="#i-folder"/></svg>/ (iMac Drive)</li>
          <li><svg class="ic"><use href="#i-box"/></svg>GeoPackage</li>
          <li><svg class="ic"><use href="#i-feather"/></svg>SpatiaLite</li>
          <li><svg class="ic" viewBox="0 0 24 24"><path d="M2 3c2-3 6-1.500 8-1.500 3-1 5-1 7 0 3-1.500 6.500 0 6 5-.5 4-2 7-3.500 8.500l3.500.5c-1.500 1.500-3.500 1.500-5 1.500V21c-.5 3.500-4.500 3-5 0l-.5-6c-1.500 2-3 1-4 0C5 17 3.500 14 2 10 1 7 .5 5 2 3z" fill="#5f93c4" stroke="#2f5478" stroke-width="1"/><path d="M9 3c-2 3-1 7-1 12M17 2.500c2 3 .5 7 0 13M12.500 6c-1.500 2-.5 5 0 8" fill="none" stroke="#2f5478" stroke-width=".9"/></svg>PostgreSQL</li>
          <li><svg class="ic" viewBox="0 0 24 24"><path d="M4.500 4.500h15v15h-15z" fill="#6399c9"/><path d="M5 1.500h14M5 22.500h14M1.500 5v14M22.500 5v14" stroke="#2c5379" stroke-width="2" stroke-dasharray="2 2"/></svg>SAP HANA</li>
          <li><svg class="ic" viewBox="0 0 24 24"><path d="M1 1c9 0 20 2 22.500 12C16 13 8 17 1 23.500 7 15 5 6 1 1z" fill="#5f93c4" stroke="#2f5478" stroke-width="1"/><path d="M8 2c5 5 4 11 1 15M13 3c4 4 4 8 2 11M18 6c2 2 2 5 1 7" fill="none" stroke="#2f5478" stroke-width="1"/></svg>MS SQL <span class="ko">서버</span></li>
          <li><svg class="ic" viewBox="0 0 24 24"><rect x="1.500" y="3.500" width="21" height="17" rx="6" fill="#6399c9" stroke="#2f5478" stroke-width="2.500"/></svg>Oracle</li>
          <li><svg class="ic"><use href="#s-globe"/></svg>WMS/WMTS</li>
          <li><svg class="ic" viewBox="0 0 24 24"><path d="M12 1l8 4-8 4-8-4zM3.500 7l8.500 4.300V23l-8.500-5zM20.500 7L12 11.300V23l8.500-5z" fill="#b4d0ec" stroke="#345b80" stroke-width="1"/></svg><span class="ko">신</span></li>
          <li><svg class="ic" viewBox="0 0 24 24"><path d="M2 1.500h20v21H2z" fill="#c9dff2"/><path d="M2 1.500h20v21H2zM8.700 1.500v21M15.300 1.500v21M2 8.500h20M2 15.500h20" fill="none" stroke="#1f3c57" stroke-width="1.300"/></svg>Vector Tiles</li>
          <li class="open"><svg class="ic" viewBox="0 0 24 24"><path d="M2 1h5.500v6H2zM9.300 1h5.500v6H9.300zM16.500 1H22v6h-5.500zM2 9h5.500v6H2zM9.300 9h5.500v6H9.300zM16.500 9H22v6h-5.500zM2 17h5.500v6H2zM9.300 17h5.500v6H9.300zM16.500 17H22v6h-5.500z" fill="#6399c9"/></svg>XYZ Tiles</li>
          <li><svg class="ic" viewBox="0 0 24 24"><circle cx="12" cy="12" r="11" fill="#6399c9" stroke="#1f3c57" stroke-width="1"/><path d="M2.500 7.500h19L22.500 12h-21z" fill="#27557f"/><path d="M8 15h8v4H8zM5 19h3l2 3z" fill="#27557f"/><path d="M1.500 12h21M3 6.500h18M3 17.500h18M12 1C6 6 6 18 12 23M12 1c6 5 6 17 0 22" stroke="#fff" stroke-width="1.200" fill="none"/></svg>WCS</li>
          <li><svg class="ic" viewBox="0 0 24 24"><use href="#s-wire"/><g transform="translate(3 4) scale(.750)"><use href="#s-vnodes" width="24" height="24"/></g></svg>WFS / OGC API - Features</li>
          <li><svg class="ic" viewBox="0 0 24 24"><use href="#s-wire"/><g transform="translate(3 4) scale(.750)"><use href="#s-vnodes" width="24" height="24"/></g><circle cx="7.500" cy="17.500" r="6" fill="#fff" stroke="#333" stroke-width=".8"/><path d="M3 16l3-3 3 1-1 3 2 2-2 4-2-3zM10 13l2.500 3-1.500 3-1.500-3z" fill="#1f3c57"/></svg>ArcGIS REST <span class="ko">서버</span></li>
        </ul>
      </section>
      <div class="splitter"></div>
      <section class="dock dock-layers">
        <div class="dock-title"><h2>레이어</h2><button aria-label="띄우기"><svg><use href="#i-float"/></svg></button><button aria-label="닫기"><svg><use href="#i-x"/></svg></button></div>
        <div class="dock-tools">
          <button aria-label="스타일 패널"><svg viewBox="0 0 24 24"><path d="M1 9l9-6 5 6-9 6z" fill="#ffe21a"/><path d="M1 13l8-3 5 5-7 4z" fill="#5c94e0"/><path d="M.5 18l7-3 5 5-6 3z" fill="#f22"/><path d="M8 12l4-3 7 6-4 8c-4-1-7-5-7-11z" fill="#dba050" stroke="#8a5a1e" stroke-width=".8"/><path d="M15.500 11L22 3.500" stroke="#b87420" stroke-width="3" stroke-linecap="round"/></svg></button>
          <button aria-label="그룹 추가"><svg viewBox="0 0 24 24"><path d="M1 14v9h11M4.500 9v10h12M8 4.500h12.500V15M8 4.500V15H13" fill="none" stroke="#87877f" stroke-width="1.200"/><path d="M11 16V3c0-3 4-3 4 0v10" fill="none" stroke="#33618f" stroke-width="1.200"/><use href="#b-plus"/></svg></button>
          <button aria-label="지도 주제 관리"><svg viewBox="0 0 24 24"><path d="M0 13c5-9 18-9 24 0-6 8-18 8-24 0z" fill="#fff" stroke="#87877f" stroke-width="1.200"/><path d="M1 9c6-7 16-7 22 0" fill="none" stroke="#87877f" stroke-width="1"/><circle cx="12" cy="12" r="5.500" fill="#6ba3d8" stroke="#2f5478" stroke-width=".8"/><circle cx="12" cy="12" r="2.300" fill="#111"/></svg><b class="tri small"></b></button>
          <button aria-label="범례 필터링"><svg viewBox="0 0 24 24"><use href="#i-funnel"/></svg><b class="tri small"></b></button>
          <button class="wide" aria-label="표현식 필터"><svg viewBox="0 0 24 24"><text x="6" y="15" font-size="32" text-anchor="middle" fill="#6d2f70" font-family="Liberation Serif, serif">ε</text><path d="M12 23v-6c0-5 11-5 11 0v6h-3v-6h-5v6z" fill="#ddd" stroke="#888" stroke-width=".9"/></svg><b class="tri"></b></button>
          <button aria-label="모두 펼치기"><svg viewBox="0 0 24 24"><use href="#i-expand"/></svg></button>
          <button aria-label="모두 접기"><svg viewBox="0 0 24 24"><use href="#i-collapse"/></svg></button>
          <button aria-label="레이어 제거"><svg viewBox="0 0 24 24"><path d="M1.500 1.500h18v18h-18z" fill="#f3f3ef" stroke="#87877f" stroke-width="1.200"/><rect x="14" y="15.500" width="9.500" height="7.500" rx="2" fill="#ee3344"/><path d="M16 19.300h5.500" stroke="#fff" stroke-width="1.800"/></svg></button>
        </div>
        <div class="layers">
          <label class="layer"><input type="checkbox" class="check" checked><span class="swatch"></span><span class="layer-name">bnd_dong_32_2023_2Q</span></label>
        </div>
      </section>
    </aside>
    <div class="vsplit"></div>
    <main class="canvas">
      <svg viewBox="714 252 2078 1946" preserveAspectRatio="xMinYMin slice" aria-label="지도">
        <defs><filter id="rough" x="-2%" y="-2%" width="104%" height="104%"><feTurbulence type="fractalNoise" baseFrequency=".06" numOctaves="2" seed="4"/><feDisplacementMap in="SourceGraphic" scale="8" xChannelSelector="R" yChannelSelector="G"/></filter></defs>
        <g filter="url(#rough)" class="map">
          <g transform="translate(940 520) scale(.7271 .5741)">
            <path class="land" d="M600 1568L575 1545 555 1530 530 1505 510 1490 495 1505 485 1513 467 1520 455 1512 446 1495 462 1475 463 1450 468 1420 470 1375 455 1388 440 1378 425 1392 420 1375 435 1360 455 1345 455 1325 445 1305 435 1283 440 1270 447 1248 437 1235 438 1210 455 1198 472 1182 490 1162 513 1155 513 1135 522 1110 520 1070 510 1048 510 1035 500 1033 475 1022 457 1020 453 968 415 970 400 960 380 948 370 925 369 885 362 860 363 830 360 807 352 793 342 810 332 820 318 803 301 797 283 810 267 822 262 836 243 820 238 798 212 795 206 770 215 750 216 735 225 712 220 702 197 703 185 735 165 750 155 765 145 750 133 735 124 710 128 685 122 694 113 675 110 655 102 650 102 617 90 613 72 625 60 615 55 600 54 575 41 552 50 543 70 530 80 506 95 520 120 510 150 497 172 479 190 487 215 489 232 505 245 500 275 487 290 490 303 473 320 482 345 487 362 503 372 490 385 503 400 516 418 525 440 510 465 490 485 474 515 473 525 488 560 491 585 490 597 478 620 475 637 464 645 475 665 470 674 455 682 480 700 500 712 521 735 508 755 503 775 513 790 510 820 516 840 530 855 548 863 562 872 558 880 562 885 540 887 520 893 503 920 513 955 503 980 473 1005 474 1015 460 1030 447 1040 430 1055 420 1065 413 1078 405 1083 392 1097 370 1100 353 1120 337 1135 320 1145 285 1155 255 1152 235 1160 205 1159 180 1161 150 1162 105 1158 92 1172 82 1185 70 1200 57 1204 67 1215 92 1232 120 1245 135 1250 160 1258 185 1260 205 1268 225 1278 255 1283 275 1300 297 1293 312 1296 335 1310 365 1330 395 1344 410 1345 435 1355 455 1365 487 1380 505 1383 530 1392 570 1395 590 1415 620 1430 650 1433 680 1440 700 1438 730 1448 755 1465 790 1470 806 1490 830 1503 850 1510 870 1525 895 1545 925 1400 1100 1300 1568"/>
            <path class="line" d="M172 479L165 510 155 550 150 590 153 625 156 660 133 660 130 680 124 690M243 500L244 520 254 548 275 540 282 520 290 490M282 515L297 510 318 543 335 538 345 520 365 505M272 542L277 580 280 625 295 662 322 660 325 710 297 735 301 795M254 548L235 570 215 597 193 608 190 630 200 665 215 690 228 692 220 705M322 660L330 640 340 605 365 575 380 562 410 565 415 550 440 540 480 540 500 550 503 575 480 590 465 625 450 635 445 660 420 680 418 710 408 740 420 750 440 743 458 742 462 775 470 780M372 575L378 600 372 650 370 690 362 730 360 770 360 797 395 787 412 765 415 748M415 550L402 535 418 525M482 477L477 510 482 540 500 553 520 578 560 582 605 602 625 560 605 540 585 510 582 492M625 560L650 548 680 547 693 557 710 540 712 521M700 547L745 550 760 530 772 512M605 602L623 628 607 632 605 690 595 725 570 750 588 775 585 800 570 790 545 783 515 788 500 775 470 777M470 780L470 815 478 845 500 852 515 880 540 895 550 890 555 925 580 920 610 918 620 930 642 912 645 885 632 870 630 840 605 822 590 832 580 800M748 550L740 590 742 625 740 665 758 675 762 720 763 760 762 815 745 805 720 803 700 820 670 820 667 780 657 780 657 815 650 835 640 845 625 830M762 720L785 720 815 710 835 717 860 700 880 675 887 655 885 600 880 562M880 675L893 690 903 730 909 765 895 800 885 830 870 850 862 880 860 925 840 915 830 940 815 945 795 925 785 895 792 885 785 845 770 820 765 797M903 730L940 722 965 690 980 670 987 652 985 635 965 605 955 570 957 520 975 490 1000 485 1015 483 1030 500 1030 570 1010 600 1000 615 985 635M955 503L957 520M987 652L1010 675 1035 690 1060 697 1085 697 1118 700 1125 685 1120 660 1137 625 1157 622 1160 595 1170 573 1205 575 1217 612 1230 600 1245 607 1258 590 1245 575 1255 555 1275 540 1277 500 1295 475 1315 470 1322 450 1312 425 1320 400 1330 395M1170 573L1165 520 1163 475 1170 450 1183 420 1185 395 1195 370 1193 330 1200 290 1197 270 1187 260 1188 220 1183 190 1190 165 1190 120 1180 80M1163 475L1125 465 1122 415 1090 410 1085 395M1197 270L1225 263 1245 273 1258 287 1275 275 1278 255M1193 373L1230 378 1243 355 1252 373 1270 375 1290 390 1302 392 1310 370M1275 540L1310 535 1350 517 1380 527M1258 590L1280 605 1283 660 1270 685 1270 710 1285 740 1305 765 1307 787 1285 800 1257 805 1253 825 1220 825 1170 825 1135 838 1100 825 1055 805 1040 780 1040 760 1020 745 980 670M1283 663L1320 680 1345 700 1375 707 1400 700 1437 700M1325 690L1350 660 1395 648 1418 625M1335 680L1365 682 1395 668 1405 655M1395 700L1397 683 1433 680M1307 787L1330 765 1365 762 1375 745 1400 740 1408 725 1437 727M1307 790L1360 800 1415 797 1440 810 1465 790M1365 800L1400 820 1420 845 1445 860 1443 917M1445 890L1460 870 1470 806M1253 825L1258 860 1272 890 1270 917M1272 890L1295 885 1310 892 1330 890 1337 917M970 690L958 735 967 775 970 830 985 850 1000 890 1040 920 1058 940 1055 960 1062 1012 1090 1040 1083 1065 1062 1075 1040 1050 1035 1085 1025 1105 1025 1125 1040 1147M967 820L957 830 975 870 985 895 975 925 950 915 935 900 932 940 905 945 880 965 870 965 862 930M895 950L880 980 862 988 862 1030 873 1060 860 1095 850 1150 835 1165 800 1130 785 1100 770 1067 730 1060 705 1048 685 1020 685 975 715 965 745 940 738 900 785 895M645 915L665 945 685 975M665 950L655 1000 580 1012 575 1000 545 990 535 985 545 1000 515 1020 510 1035M575 1013L610 1055 620 1085 608 1110 585 1150 577 1165 577 1210M608 1110L630 1130M612 1060L623 1052 640 1085 640 1130M640 1085L690 1075 705 1048M873 1060L905 1053 920 1080 960 1115 1025 1125 1010 1147 950 1158M835 1165L840 1175M1062 1012L1110 1010 1118 965 1150 955 1190 930M1090 1040L1130 1050 1150 1073 1180 1080M453 968L455 940 485 910 483 880 475 848M455 1198L490 1220 515 1222 540 1240M455 1345L475 1300 500 1290 518 1300 520 1315 545 1333 565 1325M470 1375L500 1382 500 1405 515 1415 515 1450 530 1447 530 1425 545 1418 550 1445 553 1420 580 1420M565 1345L550 1380 555 1400 545 1418M1058 1240L1080 1247 1085 1220 1110 1195 1125 1175 1150 1160 1160 1175 1178 1215M1080 1250L1083 1280 1110 1310 1125 1330 1165 1340 1175 1370 1170 1410 1160 1430 1140 1452M1053 1250L1053 1290 1045 1303 1025 1300M1170 1410L1180 1425M617 1140L630 1128 648 1133 650 1145 660 1160 645 1175 625 1165 617 1150 630 1140 645 1160 635 1150 620 1162M622 1135L640 1152 652 1148M628 1170L636 1145 630 1130M613 1200L615 1170M660 1165L700 1168 710 1188M640 1200L632 1180 650 1170M580 1163L600 1150 615 1160M765 1185L775 1175 790 1182M1405 650L1425 668M1410 660L1428 648M1402 660L1425 655M1412 670L1420 645"/>
            <path class="islets" d="M1248 133v4M1255 165v5M1262 210v5M1280 243v3M1300 300v4M1345 420v5M1366 466v4M1376 492v5M1380 505v6M1386 540v6M1390 575v6M1409 588v5M1418 625v6M1440 670v4M1432 655v5"/>
          </g>
          <g transform="translate(1200 1050) scale(.3954 .5102)">
            <path class="land" d="M440 705L443 718 448 738 460 743 478 740 560 850 640 980 592 1058 588 1075 578 1103 552 1106 548 1145 555 1190 565 1215 532 1228 540 1250 550 1280 530 1308 527 1345 523 1375 532 1400 540 1435 560 1460 600 1480 640 1478 663 1467 700 1466 712 1455 725 1460 742 1448 775 1455 793 1467 805 1447 835 1445 852 1410 848 1375 828 1343 857 1318 890 1302 930 1292 965 1297 997 1312 1000 1335 1028 1360 1014 1383 1025 1402 1075 1400 1120 1388 1155 1373 1165 1345 1178 1330 1205 1343 1245 1361 1262 1350 1265 1332 1290 1312 1315 1304 1340 1322 1360 1338 1395 1338 1422 1368 1460 1364 1505 1353 1560 1340 1560 705"/>
            <path class="land" d="M1515 1385L1500 1405 1475 1412 1476 1430 1440 1432 1422 1453 1440 1475 1478 1492 1515 1470M1476 1430L1515 1440"/>
            <path class="line" d="M838 868L855 885 848 910 875 962 905 965 930 955 965 962 985 972 1020 975 1035 965 1028 948M838 868L825 890 800 910 795 930 770 942M905 965L885 1000 882 1015 860 1045 845 1068 810 1068 765 1062 755 1045 738 1045 735 1010 727 990M738 1050L705 1058 698 1025M1020 975L1060 975 1110 1010 1130 1043 1090 1050 1090 1090 1070 1108 1045 1112 1025 1140 1020 1170 1050 1205 1150 1218 1160 1185 1180 1172 1225 1175 1255 1180 1255 1155 1280 1150 1270 1110 1275 1070 1330 1065 1400 1060 1405 1047M1130 1043L1155 1065 1185 1080 1215 1078 1270 1088M1130 1043L1155 1040 1160 1020 1180 1000M1150 1218L1150 1245 1165 1262 1215 1265 1265 1250 1270 1235 1300 1222 1310 1215 1350 1217 1390 1240 1430 1250 1482 1240 1465 1180 1472 1130 1470 1055M1470 1068L1505 1085M1300 1218L1335 1250 1325 1275 1322 1304M1505 1255L1485 1258 1482 1275 1498 1300 1498 1335 1482 1355M552 1115L575 1120 585 1140 620 1165 650 1160 685 1145 700 1155 727 1155 725 1280 735 1298 762 1308 795 1322 828 1335M725 1158L765 1150 785 1140 765 1125 765 1112 795 1120 810 1085 830 1090 820 1120 850 1140M550 1280L595 1265 625 1300 655 1318 658 1345 680 1350 685 1378 668 1395 665 1467M685 1375L705 1355 710 1332 740 1312 762 1308M857 1318L842 1290 848 1255 835 1200 800 1190 798 1158 785 1140M835 1200L855 1175 850 1145 805 1155M810 1068L812 1085M855 1042L890 1045 905 1090 960 1115 1000 1120 1025 1140M850 1070L870 1100 870 1140 900 1150 960 1130 955 1115M900 1150L960 1160 1000 1175 1020 1170M1000 1175L985 1225 925 1230 890 1215 890 1190 910 1190 895 1165 855 1180M1050 1205L1050 1265 1035 1300 997 1312M850 1140L870 1160 890 1140 860 1130 855 1150 885 1150 865 1165M905 1090L890 1115 910 1130 925 1100M852 1120L880 1135 875 1160 855 1155M865 1105L862 1130"/>
          </g>
        </g>
      </svg>
    </main>
  </div>

  <footer class="status">
    <label class="search"><svg viewBox="0 0 30 30" aria-hidden="true"><circle cx="12" cy="12" r="9.500" fill="none" stroke="#888" stroke-width="2"/><path d="M19 19l9 9" stroke="#888" stroke-width="2.500"/></svg><input type="text" aria-label="위치" placeholder="위치를 찾으려면 입력하십시오 (⌘K)"></label>
    <span class="msg">준비</span>
    <label class="field">좌표<input type="text" class="box coord" value="1201661,1949243"></label>
    <button class="mouse" aria-label="영역 표시"><svg viewBox="0 0 36 38"><ellipse cx="14" cy="13" rx="7" ry="12" transform="rotate(-25 14 13)" fill="#fff" stroke="#111" stroke-width="3"/><path d="M8 8l12 16M14 4l4 12" stroke="#111" stroke-width="4"/><ellipse cx="22" cy="27" rx="9" ry="9" fill="#fff" stroke="#111" stroke-width="3"/><circle cx="22" cy="28" r="3" fill="none" stroke="#111" stroke-width="2"/><path d="M24 8l3-3M28 10l4-3M2 28h3M31 3h3" stroke="#111" stroke-width="2"/></svg></button>
    <label class="field scale">축척<span class="box combo"><input type="text" value="1:884865"><b class="tri"></b></span></label>
    <button class="lock" aria-label="축척 잠금"><svg viewBox="0 0 30 38"><path d="M6 20V11c0-12 18-12 18 0v9" fill="none" stroke="#8c8c88" stroke-width="4"/><path d="M6 20V11c0-12 18-12 18 0v9" fill="none" stroke="#ddd" stroke-width="1"/><rect x="1" y="17" width="28" height="20" rx="3" fill="#666"/></svg></button>
    <label class="field">확대경<span class="box spin"><input type="text" value="100%"><i class="steps"></i></span></label>
    <label class="field rot">회전<span class="box spin"><input type="text" value="0.0 °"><i class="steps"></i></span></label>
    <label class="field render"><input type="checkbox" class="check" checked>렌더링</label>
    <button class="crs"><svg viewBox="0 0 36 36"><circle cx="18" cy="18" r="16" fill="#ddd" stroke="#666" stroke-width="2"/><path d="M18 2v32M2 18h32M5 9h26M5 27h26M18 2C6 10 6 26 18 34M18 2c12 8 12 24 0 32" fill="none" stroke="#666" stroke-width="2"/></svg>알 수 없는 좌표계</button>
    <button class="bubble" aria-label="메시지"><svg viewBox="0 0 40 38"><path d="M20 2c10 0 18 6 18 15 0 5-3 9-6 11 0 3 1 6 4 8-5 0-9-1-12-5C10 32 2 26 2 17 2 8 10 2 20 2z" fill="#666"/></svg></button>
  </footer>
</div>
</div>

<section class="finder">
  <nav class="side">
    <div class="lights color"><i></i><i></i><i></i></div>
    <h3>즐겨찾기</h3>
    <ul>
      <li><svg viewBox="0 0 36 36" class="navy"><circle cx="18" cy="18" r="2.500" fill="#454e8b"/><path d="M12 31a16 16 0 1 1 12 0M13.500 27a11.500 11.500 0 1 1 9 0M15 23a7 7 0 1 1 6 0"/></svg>AirDrop</li>
      <li><svg viewBox="0 0 36 36" class="navy"><circle cx="18" cy="18" r="14.500"/><path d="M18 8v11h-8"/></svg>최근 항목</li>
      <li><svg viewBox="0 0 36 36" class="navy"><rect x="1.500" y="5" width="33" height="25" rx="4"/><path d="M2 11h32M22 25h8"/></svg>데스크탑</li>
      <li></li>
      <li></li>
      <li><svg viewBox="0 0 36 36" class="navy"><circle cx="18" cy="18" r="14.500"/><path d="M18 9v17M12 20l6 6 6-6"/></svg>다운로드</li>
      <li><svg viewBox="0 0 36 36" class="navy"><path d="M1.500 18L18 3l16.500 15M6 15v17h24V15M28 11V5h2v8"/><path d="M14.500 32V21h7v11z" fill="#454e8b"/></svg>gnjoint85</li>
    </ul>
    <h3>위치</h3>
    <ul>
      <li><svg viewBox="0 0 36 30" class="gray"><path d="M9 27c-9 0-9-11-2-12C7 3 21 0 25 10c9-1 13 17 2 17z"/></svg>iCloud Drive</li>
      <li><svg viewBox="0 0 36 34"><rect x="1" y="2" width="34" height="24" rx="3" fill="#c3bebc" stroke="#6f6b6a" stroke-width="2"/><path d="M1 21h34v4q0 2-3 2H4q-3 0-3-2zM14 27h8v4h2v2H12v-2h2z" fill="#6f6b6a"/></svg><span class="ko">이음과닿음심⋯</span></li>
      <li><svg viewBox="0 0 36 30"><use href="#i-drive"/><path d="M15 20v4M19 20v4M23 20v4M27 20v4" stroke="#6f6b6a" stroke-width="1.500"/></svg>iMac Drive</li>
      <li><svg viewBox="0 0 36 30"><use href="#i-drive"/><circle cx="28" cy="22" r="1.800" fill="#6f6b6a"/></svg>EXTERN...<svg class="eject" viewBox="0 0 24 24"><path d="M12 1l11 14H1zM1 17.500h22V23H1z" fill="#a8a3a1"/></svg></li>
      <li><svg viewBox="0 0 36 32" class="gray"><path d="M2 5q0-3 3-3h6l4 4h16q3 0 3 3v17q0 3-3 3H5q-3 0-3-3zM2 12h32"/></svg>MYBOX - af...</li>
    </ul>
    <span class="thumb"></span>
  </nav>
  <div class="pane">
    <div class="bar">
      <button aria-label="뒤로"><svg viewBox="0 0 20 34"><path d="M18 1L2 17l16 16"/></svg></button>
      <button aria-label="앞으로"><svg viewBox="0 0 20 34"><path d="M2 1l16 16L2 33"/></svg></button>
      <h2>bnd_dong_32_202...</h2>
      <span class="dots"></span>
    </div>
    <table class="files">
      <thead><tr><th>이름</th></tr></thead>
      <tbody>
        <tr><td><svg><use href="#i-file"/></svg>bnd_dong_32_2023_2Q.cpg</td></tr>
        <tr><td><svg><use href="#i-file"/></svg>bnd_dong_32_2023_2Q.dbf</td></tr>
        <tr><td><svg><use href="#i-file"/></svg>bnd_dong_32_2023_2Q.prj</td></tr>
        <tr><td><svg><use href="#i-file"/></svg>bnd_dong_32_2023_2Q.shp</td></tr>
        <tr><td><svg><use href="#i-file"/></svg>bnd_dong_32_2023_2Q.shx</td></tr>
      </tbody>
    </table>
    <div class="stripes"></div>
    <div class="hscroll"><span></span></div>
  </div>
</section>
<div class="mark"></div>
<svg class="arrow" viewBox="1330 1174 966 446" aria-hidden="true"><path d="M1330 1215L1747 1174 1665 1295C1800 1395 2060 1478 2295 1399 2075 1632 1780 1644 1531 1490L1443 1620z" fill="#ffc000"/></svg>
</body>
</html>
```
FILE: styles.css
```css
* { box-sizing: border-box; }
body { margin: 0; min-height: 100vh; position: relative; overflow: hidden; background: #fff; color: #262626; font: 30px/1.2 Inter, "Noto Sans CJK KR", sans-serif; }
h1, h2, h3, ul { margin: 0; padding: 0; list-style: none; }
button { font: inherit; color: inherit; border: 0; padding: 0; background: none; }
input { font: inherit; color: inherit; border: 0; padding: 0; margin: 0; background: none; min-width: 0; outline: 0; }
svg { display: block; flex: none; }
.sprite { position: absolute; }

.desktop { min-height: 100vh; display: flex; padding: 4px 3px 3px 1px; background: linear-gradient(#e8a03a, #e8a03a) content-box; }
.desktop::after { content: ""; width: 12px; margin-top: 20px; background: linear-gradient(#d8d8d8 0 96px, #c6c6c6 96px); border-radius: 0 12px 0 0; box-shadow: -22px 20px #cfcfcf; }
.qgis { flex: 1; min-width: 0; position: relative; display: flex; flex-direction: column; background: #ececec; border-radius: 0 22px 22px 0; border-right: 2px solid #999; }

.titlebar { height: 61px; padding: 12px 13px; display: grid; grid-template-columns: 1fr auto 1fr; background: #f0ebe5; border-bottom: 2px solid #d2cfcc; border-radius: 0 22px 0 0; }
.titlebar h1 { font-size: 30px; font-weight: 700; line-height: 28px; color: #b1aca6; }
.lights { display: flex; gap: 20px; }
.lights i { width: 28px; height: 28px; border-radius: 50%; background: #d7d2ce; border: 1px solid #bcb7b3; }
.lights.color { padding-left: 8px; }
.lights.color i { border: 0; background: #ff5f57; }
.lights.color i:nth-child(2) { background: #febc2e; }
.lights.color i:nth-child(3) { background: #28c840; }

.toolrow { display: grid; height: 92px; }
.toolrow-main { grid-template-columns: 504px 1303px 468px 1fr; }
.toolrow-edit { grid-template-columns: 584px 1122px 693px 118px 117px 118px 1fr; }
.group { display: flex; align-items: center; gap: 4px; padding-left: 12px; background: linear-gradient(#f6f6f6, #eaeaea); border-bottom: 3px solid #b0b0b0; border-right: 1px solid #f4f4f4; min-width: 0; }
.group:first-child { padding-left: 3px; }
.grip { width: 16px; height: 42px; background: radial-gradient(circle, #aaa 1px, transparent 2px) 0 0 / 8px 6px; }
.group:first-child .grip { margin-right: 2px; }
.group button { width: 75px; height: 73px; display: flex; align-items: center; position: relative; padding-left: 8px; flex: none; }
.group button svg { width: 58px; height: 58px; overflow: visible; }
.group .pressed { background: #d9d9d9; border: 2px solid #adadad; border-radius: 6px; padding-left: 6px; }
.group .menu { width: 104px; gap: 14px; }
.off svg { opacity: .36; }
.dull { filter: grayscale(.8); }
.tri { border: 9px solid transparent; border-top: 10px solid #555; border-bottom: 0; }
.tri.small { border-width: 7px 7px 0; position: absolute; right: 6px; bottom: 6px; }
.group .more { margin-left: auto; width: 38px; padding: 0; justify-content: center; font-size: 38px; color: #555; }
.sep { width: 14px; height: 46px; background: linear-gradient(#d0d0d0, #d0d0d0) center / 2px 100% no-repeat; }

.work { flex: 1; display: flex; min-height: 0; padding-top: 2px; }
.docks { width: 696px; display: flex; flex-direction: column; border-top: 1px solid #d8d8d8; }
.dock-title { display: flex; align-items: center; height: 42px; gap: 8px; padding: 0 4px 0 2px; }
.dock-title h2 { flex: 1; font-size: 25px; font-weight: 400; }
.dock-title svg { width: 26px; height: 26px; }
.dock-tools { display: flex; align-items: center; height: 76px; padding-left: 12px; gap: 20px; }
.dock-tools button { position: relative; display: flex; align-items: center; }
.dock-tools svg { width: 39px; height: 38px; overflow: visible; }
.dock-tools .tri.small { right: -4px; bottom: -5px; }
.dock-tools .wide { width: 68px; gap: 10px; margin-right: 2px; }
.tree { height: 806px; padding-top: 2px; background: #fff; border: 2px solid #bbb; border-left: 0; }
.tree li { height: 43px; display: flex; align-items: center; padding-left: 41px; white-space: pre; }
.tree .ic { width: 38px; height: 38px; margin-right: 15px; }
.tree li.open::before { content: ""; width: 10px; height: 18px; margin: 0 22px 0 -32px; background: #636363; clip-path: polygon(0 0, 100% 50%, 0 100%); flex: none; }
.ko { font-size: 29px; }
.splitter { height: 18px; width: 48px; margin: 0 auto; background: radial-gradient(circle, #aaa 1px, transparent 2px) center / 8px 8px repeat-x; }
.dock-layers { flex: 1; display: flex; flex-direction: column; }
.layers { flex: 1; background: #fff; border: 1px solid #bbb; border-left: 0; }
.layer { display: flex; align-items: center; height: 44px; background: #dcdcdc; padding-left: 50px; color: #000; }
.check { appearance: none; width: 33px; height: 33px; background: #fff url("data:image/svg+xml,%3Csvg xmlns='http://www.w3.org/2000/svg' viewBox='0 0 32 32'%3E%3Cpath d='M8 16l6 8L23 6' fill='none' stroke='%23222' stroke-width='4'/%3E%3C/svg%3E"); border: 2px solid #b8b8b8; flex: none; }
.swatch { width: 38px; height: 38px; margin: 0 15px 0 16px; background: #679c6b; border: 1px solid #3c6440; }
.layer-name { font-size: 33px; font-weight: 700; line-height: 40px; text-decoration: underline; text-decoration-thickness: 3px; text-underline-offset: 5px; text-decoration-skip-ink: none; }
.vsplit { width: 15px; display: grid; place-items: center; }
.vsplit::before { content: ""; width: 8px; height: 40px; background: radial-gradient(circle, #aaa 1px, transparent 2px) center / 8px 8px; }
.canvas { flex: 1; position: relative; overflow: hidden; background: #fff; border: 1px solid #bbb; margin-right: 1px; }
.canvas svg { position: absolute; inset: 0; width: 100%; height: 100%; }
.land { fill: #679c6b; stroke: #232323; stroke-width: 2; vector-effect: non-scaling-stroke; }
.line, .islets { fill: none; stroke: #232323; stroke-width: 2; vector-effect: non-scaling-stroke; stroke-linejoin: round; }
.islets { stroke-width: 4; }

.status { height: 71px; display: flex; align-items: center; gap: 22px; padding: 4px 70px 0 3px; font-size: 25px; color: #1c1c1c; white-space: nowrap; }
.search { flex: 1; height: 58px; display: flex; align-items: center; gap: 18px; padding-left: 18px; margin-right: -4px; background: #fff; border: 2px solid #a8a8a8; border-radius: 6px; min-width: 0; }
.search svg { width: 30px; height: 30px; }
.search input { flex: 1; font-size: 29px; }
.search input::placeholder { color: #8b8b8b; opacity: 1; }
.msg { width: 30px; overflow: hidden; }
.field { display: flex; align-items: center; gap: 6px; }
.box { height: 56px; width: 221px; background: #fff; border: 2px solid #a8a8a8; border-radius: 6px; font-size: 27px; padding-left: 10px; display: flex; align-items: center; }
.box input { flex: 1; width: 100px; }
.coord { width: 274px; padding-left: 20px; font-size: 28px; }
.mouse { margin-left: -12px; }
.mouse svg { width: 36px; height: 40px; }
.scale { margin-left: 12px; }
.combo { height: 58px; padding-left: 8px; }
.combo .tri { margin-left: 12px; margin-right: 15px; }
.lock { margin-left: 7px; }
.lock svg { width: 29px; height: 38px; }
.rot { gap: 22px; }
.render { gap: 14px; margin-left: -6px; }
.steps { width: 34px; height: 52px; border-left: 2px solid #bbb; display: grid; place-items: center; background: #f7f7f7; }
.steps::before, .steps::after { content: ""; border: 9px solid transparent; border-bottom: 11px solid #555; border-top: 0; }
.steps::after { border-bottom: 0; border-top: 11px solid #555; }
.crs { display: flex; align-items: center; gap: 6px; margin-left: 14px; font-weight: 500; }
.crs svg { width: 36px; height: 36px; }
.bubble { margin-left: 33px; }
.bubble svg { width: 39px; height: 38px; }

.finder { position: absolute; left: 1796px; top: 1047px; right: 2px; height: 1045px; display: flex; border-radius: 22px 0 0 22px; overflow: hidden; border-top: 1px solid #b5b5b0; box-shadow: 0 34px 84px rgba(0, 0, 0, .5), 0 0 2px rgba(0, 0, 0, .5); }
.side { width: 381px; flex: none; position: relative; padding: 48px 0 0 39px; color: #3f413d; border-right: 2px solid #cbcbc5; background: radial-gradient(ellipse 190px 190px at 100% 10%, #ebe2e0, transparent), linear-gradient(174deg, #d9e1d0 66%, #ebe2e0 82%); }
.side h3 { margin-top: 53px; height: 40px; font-size: 24px; line-height: 40px; font-weight: 600; color: #9ba294; }
.side ul { padding-top: 2px; }
.side ul + h3 { margin-top: 33px; }
.side li { height: 67px; display: flex; align-items: center; gap: 17px; padding-left: 4px; white-space: nowrap; }
.side li svg { width: 36px; height: 36px; }
.side li .eject { width: 24px; height: 24px; margin-left: 8px; }
.navy { fill: none; stroke: #454e8b; stroke-width: 2.5; }
.gray { fill: none; stroke: #6f6b6a; stroke-width: 2.2; }
.thumb { position: absolute; right: 8px; top: 131px; width: 19px; height: 509px; border-radius: 10px; background: #a9afa4; }
.pane { flex: 1; min-width: 0; display: flex; flex-direction: column; background: #fff; }
.bar { height: 126px; display: flex; align-items: center; background: #fbf5f1; border-bottom: 2px solid #dedbd8; padding-left: 56px; overflow: hidden; }
.bar button { margin-right: 67px; }
.bar button + button { margin-right: 47px; }
.bar svg { width: 20px; height: 34px; fill: none; stroke: #b9b4b1; stroke-width: 3; }
.bar h2 { font-size: 36px; font-weight: 600; color: #4c4947; white-space: nowrap; width: 407px; flex: none; }
.dots { width: 16px; height: 30px; flex: none; background: radial-gradient(circle, #666 2px, transparent 3px) 0 0 / 10px 10px; }
.files { border-collapse: collapse; width: 100%; font-size: 31px; font-weight: 500; color: #232323; }
.files th { height: 65px; padding: 0 0 4px 113px; text-align: left; font-size: 24px; font-weight: 600; border-bottom: 2px solid #dedede; }
.files tbody::before { content: ""; display: block; height: 12px; }
.files td { height: 48px; padding: 0 0 0 66px; display: flex; align-items: center; gap: 17px; }
.files td svg { width: 30px; height: 36px; }
.files tr:nth-child(even) td { background: #f3f5f4; }
.stripes { flex: 1; background: repeating-linear-gradient(#f3f5f4 0 48px, #fff 48px 96px); }
.hscroll { height: 36px; padding: 8px 0 8px 8px; background: #fafafa; border-top: 2px solid #e4e4e4; }
.hscroll span { display: block; height: 19px; border-radius: 10px 0 0 10px; background: #c1c1c1; }

.mark { position: absolute; left: 2217px; top: 1373px; width: 534px; height: 100px; border: 23px solid #f00; border-radius: 16px; }
.arrow { position: absolute; left: 1330px; top: 1174px; width: 966px; height: 446px; }
```
